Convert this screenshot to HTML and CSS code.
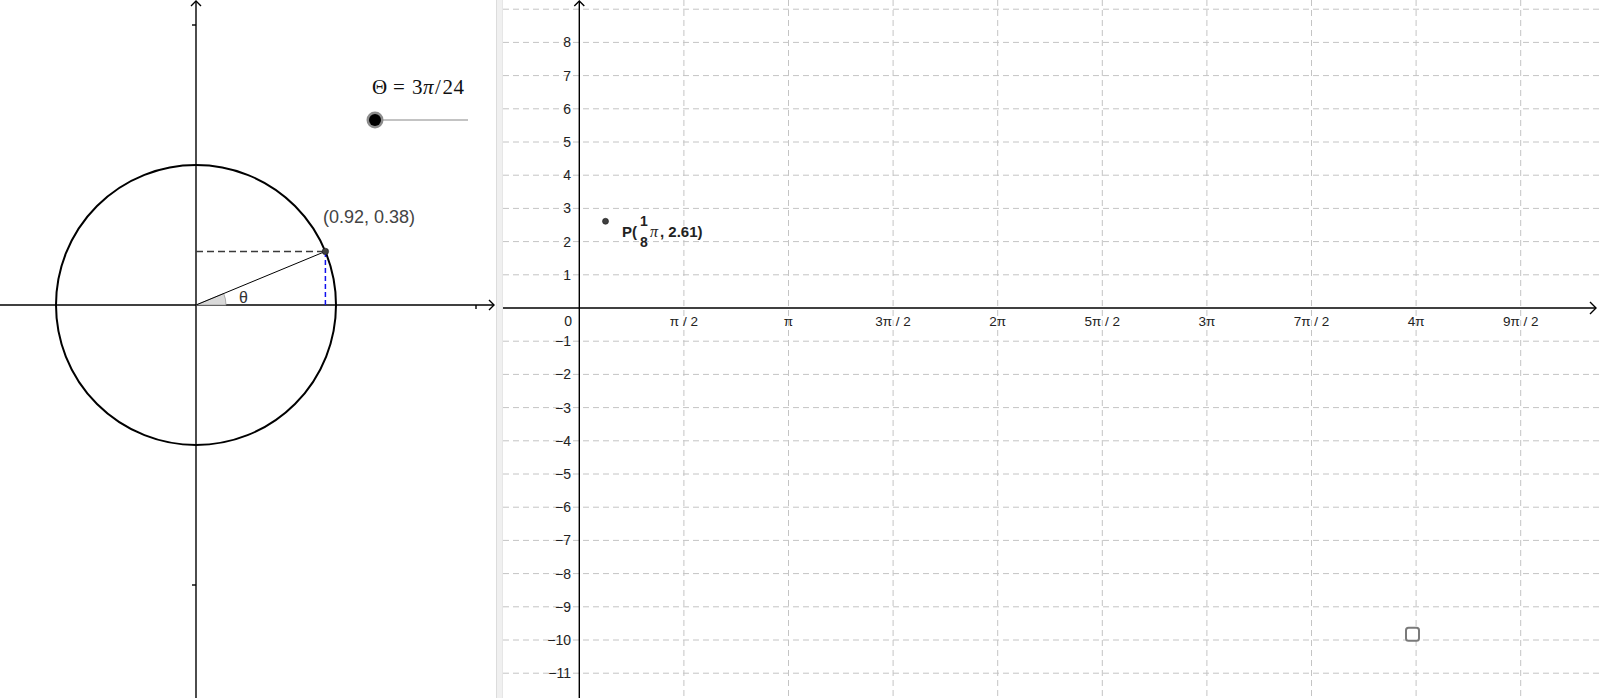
FILE: index.html
```html
<!DOCTYPE html>
<html>
<head>
<meta charset="utf-8">
<link rel="stylesheet" href="styles.css">
</head>
<body>
<div class="applet">
  <div class="panel panel-left">
    <svg class="canvas" width="496" height="698" viewBox="0 0 496 698">
      <!-- axes -->
      <line class="axis" x1="196" y1="1" x2="196" y2="698"/>
      <path class="axis" d="M191,6 L196,1 L201,6"/>
      <line class="axis" x1="0" y1="305" x2="494" y2="305"/>
      <path class="axis" d="M489,300 L494,305 L489,310"/>
      <line class="axis" x1="192" y1="25" x2="196" y2="25"/>
      <line class="axis" x1="192" y1="585" x2="196" y2="585"/>
      <line class="axis" x1="476" y1="305" x2="476" y2="309"/>
      <!-- unit circle -->
      <circle class="circle" cx="196" cy="305" r="140"/>
      <!-- angle sector -->
      <path class="sector" d="M196,305 L226,305 A30,30 0 0 0 223.7,293.5 Z"/>
      <!-- radius -->
      <line class="radius" x1="196" y1="305" x2="325.4" y2="251.4"/>
      <!-- projections -->
      <line class="proj-h" x1="196" y1="251.4" x2="325.4" y2="251.4"/>
      <line class="proj-v" x1="325.4" y1="252" x2="325.4" y2="305"/>
      <circle class="pt" cx="325.4" cy="251.4" r="3.2"/>
      <text class="coord-label" x="323" y="223">(0.92, 0.38)</text>
      <text class="theta" x="239" y="303">θ</text>
      <!-- slider -->
      <text class="slider-label" x="372" y="94">Θ</text>
      <text class="slider-label" x="393" y="94">=</text>
      <text class="slider-label" x="412 423 435 442.5 453.5" y="94">3<tspan class="it">π</tspan>/24</text>
      <line class="slider-line" x1="375" y1="120" x2="468" y2="120"/>
      <circle class="slider-ring" cx="375" cy="120" r="8.5"/>
      <circle class="slider-knob" cx="375" cy="120" r="6"/>
    </svg>
  </div>
  <div class="divider"></div>
  <div class="panel panel-right">
    <svg class="canvas" width="1097" height="698" viewBox="503 0 1097 698">
      <g class="grid">
        <line x1="503" y1="9.2" x2="1600" y2="9.2"/>
        <line x1="503" y1="42.4" x2="1600" y2="42.4"/>
        <line x1="503" y1="75.6" x2="1600" y2="75.6"/>
        <line x1="503" y1="108.8" x2="1600" y2="108.8"/>
        <line x1="503" y1="142" x2="1600" y2="142"/>
        <line x1="503" y1="175.2" x2="1600" y2="175.2"/>
        <line x1="503" y1="208.4" x2="1600" y2="208.4"/>
        <line x1="503" y1="241.6" x2="1600" y2="241.6"/>
        <line x1="503" y1="274.8" x2="1600" y2="274.8"/>
        <line x1="503" y1="341.2" x2="1600" y2="341.2"/>
        <line x1="503" y1="374.4" x2="1600" y2="374.4"/>
        <line x1="503" y1="407.6" x2="1600" y2="407.6"/>
        <line x1="503" y1="440.8" x2="1600" y2="440.8"/>
        <line x1="503" y1="474" x2="1600" y2="474"/>
        <line x1="503" y1="507.2" x2="1600" y2="507.2"/>
        <line x1="503" y1="540.4" x2="1600" y2="540.4"/>
        <line x1="503" y1="573.6" x2="1600" y2="573.6"/>
        <line x1="503" y1="606.8" x2="1600" y2="606.8"/>
        <line x1="503" y1="640" x2="1600" y2="640"/>
        <line x1="503" y1="673.2" x2="1600" y2="673.2"/>
        <line x1="683.9" y1="0" x2="683.9" y2="698"/>
        <line x1="788.5" y1="0" x2="788.5" y2="698"/>
        <line x1="893.1" y1="0" x2="893.1" y2="698"/>
        <line x1="997.7" y1="0" x2="997.7" y2="698"/>
        <line x1="1102.3" y1="0" x2="1102.3" y2="698"/>
        <line x1="1206.9" y1="0" x2="1206.9" y2="698"/>
        <line x1="1311.5" y1="0" x2="1311.5" y2="698"/>
        <line x1="1416.1" y1="0" x2="1416.1" y2="698"/>
        <line x1="1520.7" y1="0" x2="1520.7" y2="698"/>
      </g>
      <line class="axis" x1="579.3" y1="1" x2="579.3" y2="698"/>
      <path class="axis" d="M574.3,6 L579.3,1 L584.3,6"/>
      <line class="axis" x1="503" y1="308" x2="1596" y2="308"/>
      <path class="axis" d="M1590,302 L1596,308 L1590,314"/>
      <g class="ylab">
        <text x="571" y="47.4">8</text>
        <text x="571" y="80.6">7</text>
        <text x="571" y="113.8">6</text>
        <text x="571" y="147">5</text>
        <text x="571" y="180.2">4</text>
        <text x="571" y="213.4">3</text>
        <text x="571" y="246.6">2</text>
        <text x="571" y="279.8">1</text>
        <text x="572" y="326">0</text>
        <text x="571" y="346.2">−1</text>
        <text x="571" y="379.4">−2</text>
        <text x="571" y="412.6">−3</text>
        <text x="571" y="445.8">−4</text>
        <text x="571" y="479">−5</text>
        <text x="571" y="512.2">−6</text>
        <text x="571" y="545.4">−7</text>
        <text x="571" y="578.6">−8</text>
        <text x="571" y="611.8">−9</text>
        <text x="571" y="645">−10</text>
        <text x="571" y="678.2">−11</text>
      </g>
      <g class="xlab">
        <text x="683.9" y="326">π / 2</text>
        <text x="788.5" y="326">π</text>
        <text x="893.1" y="326">3π / 2</text>
        <text x="997.7" y="326">2π</text>
        <text x="1102.3" y="326">5π / 2</text>
        <text x="1206.9" y="326">3π</text>
        <text x="1311.5" y="326">7π / 2</text>
        <text x="1416.1" y="326">4π</text>
        <text x="1520.7" y="326">9π / 2</text>
      </g>
      <circle class="pt" cx="605.5" cy="221.3" r="3"/>
      <text class="plabel" x="622" y="237">P(</text>
      <text class="plabel frac" x="640" y="225.5">1</text>
      <text class="plabel frac" x="640" y="247">8</text>
      <text class="pi-it" x="650" y="237">π</text>
      <text class="plabel" x="660" y="237">, 2.61)</text>
      <rect class="checkbox" x="1406" y="627.7" width="13" height="13" rx="2.5"/>
    </svg>
  </div>
</div>
</body>
</html>
```
FILE: styles.css
```css
html, body {
  margin: 0;
  padding: 0;
  background: #ffffff;
}
.applet {
  display: flex;
  flex-direction: row;
  width: 1600px;
  height: 698px;
  overflow: hidden;
}
.panel {
  height: 698px;
  overflow: hidden;
}
.panel-left {
  width: 496px;
  flex: 0 0 496px;
}
.panel-right {
  flex: 1 1 auto;
}
.divider {
  flex: 0 0 5px;
  background: #f0f0f0;
  border-left: 1px solid #dcdcdc;
  border-right: 1px solid #e6e6e6;
}
.canvas {
  display: block;
}
.axis {
  stroke: #000;
  stroke-width: 1.4;
  fill: none;
}
.grid line {
  stroke: #c4c4c4;
  stroke-width: 1;
  stroke-dasharray: 6 4;
}
.circle {
  fill: none;
  stroke: #000;
  stroke-width: 2;
}
.sector {
  fill: #d9d9d9;
  stroke: #999;
  stroke-width: 0.8;
}
.radius {
  stroke: #000;
  stroke-width: 1;
}
.proj-h {
  stroke: #3a3a3a;
  stroke-width: 1.5;
  stroke-dasharray: 7 4;
}
.proj-v {
  stroke: #1010ee;
  stroke-width: 1.5;
  stroke-dasharray: 5 3;
}
.pt {
  fill: #404040;
  stroke: #1a1a1a;
  stroke-width: 0.6;
}
.coord-label {
  font-family: "Liberation Sans", Arial, sans-serif;
  font-size: 18px;
  fill: #444;
}
.theta {
  font-family: "Liberation Sans", Arial, sans-serif;
  font-size: 16px;
  fill: #333;
}
.slider-label {
  font-family: "Liberation Serif", "Times New Roman", serif;
  font-size: 21px;
  fill: #111;
}
.slider-label .it {
  font-style: italic;
}
.slider-line {
  stroke: #888;
  stroke-width: 1.2;
}
.slider-ring {
  fill: #8c8c8c;
}
.slider-knob {
  fill: #000;
}
.ylab text {
  font-family: "Liberation Sans", Arial, sans-serif;
  font-size: 14px;
  fill: #222;
  text-anchor: end;
}
.xlab text {
  font-family: "Liberation Sans", Arial, sans-serif;
  font-size: 13.5px;
  fill: #222;
  text-anchor: middle;
}
.plabel {
  font-family: "Liberation Sans", Arial, sans-serif;
  font-size: 15px;
  font-weight: bold;
  fill: #222;
}
.plabel.frac {
  font-size: 14px;
}
.pi-it {
  font-family: "Liberation Serif", "Times New Roman", serif;
  font-style: italic;
  font-size: 16px;
  fill: #222;
}
.checkbox {
  fill: #fff;
  stroke: #7a7a7a;
  stroke-width: 2;
}
```
